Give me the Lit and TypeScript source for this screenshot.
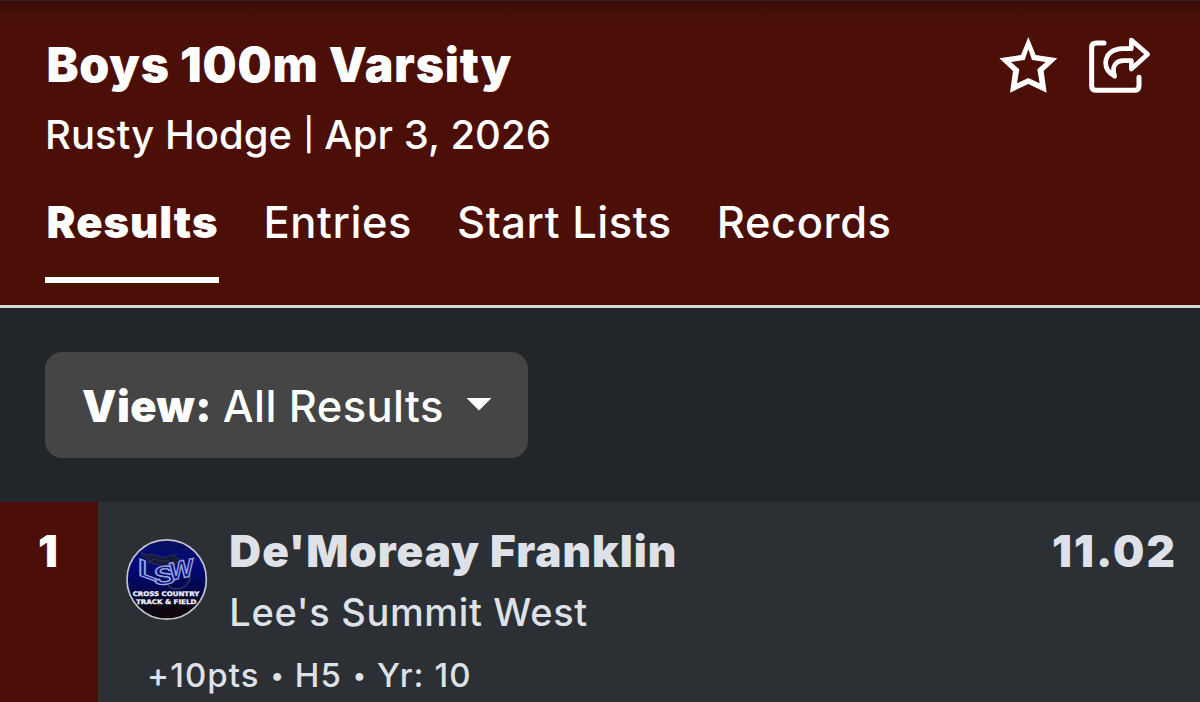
import { LitElement, html, css } from 'lit';
import { customElement, property, state } from 'lit/decorators.js';

@customElement('team-logo')
export class TeamLogo extends LitElement {
  static get styles() {
    return css`
      :host {
        display: block;
        width: 83.33px;
        height: 83.33px;
      }
      svg {
        display: block;
        width: 100%;
        height: 100%;
      }
      .mark {
        font-family: 'Liberation Sans', sans-serif;
        font-weight: 700;
        fill: #0c1688;
        stroke: #9ba5dc;
        stroke-width: 4;
      }
      .club {
        font-family: 'DejaVu Sans', sans-serif;
        font-weight: 700;
        font-size: 19px;
        fill: #f4f4fa;
        stroke: #f4f4fa;
        stroke-width: 0.8;
      }
    `;
  }

  render() {
    return html`
      <svg viewBox="45 24 250 250">
        <defs>
          <linearGradient id="sky" x1="0" y1="0" x2="0" y2="1">
            <stop offset="0" stop-color="#07105c" />
            <stop offset="0.3" stop-color="#020a7c" />
            <stop offset="0.62" stop-color="#03064e" />
            <stop offset="0.82" stop-color="#0a0718" />
            <stop offset="1" stop-color="#150507" />
          </linearGradient>
          <clipPath id="disc"><circle cx="170" cy="148.5" r="119" /></clipPath>
        </defs>
        <circle cx="170" cy="148.5" r="119" fill="url(#sky)" stroke="#c3c4cf" stroke-width="5" />
        <g fill="#161a3c" stroke="#3a3e58" stroke-width="2">
          <path d="M94 68 C110 82 128 66 150 80 C160 88 176 74 200 74 C190 80 200 86 216 88 L196 104 L150 108 L112 96 L124 92 C108 88 98 80 94 68Z" />
          <path d="M126 88 C144 86 150 98 176 92" fill="none" />
          <path d="M238 128 C246 156 224 180 192 176 C180 174 174 168 172 162" fill="none" stroke-width="4" />
        </g>
        <text class="mark" transform="translate(84 134) skewY(20)" font-size="72" textLength="60" lengthAdjust="spacingAndGlyphs">L</text>
        <text class="mark" transform="translate(131 165) skewY(-4)" font-size="78" textLength="66" lengthAdjust="spacingAndGlyphs">S</text>
        <text class="mark" transform="translate(178 152) skewY(-12)" font-size="76" textLength="72" lengthAdjust="spacingAndGlyphs">W</text>
        <g clip-path="url(#disc)">
          <text class="club" x="68" y="197" textLength="200" lengthAdjust="spacingAndGlyphs">CROSS COUNTRY</text>
          <text class="club" x="78" y="222" textLength="181" lengthAdjust="spacingAndGlyphs">TRACK &amp; FIELD</text>
        </g>
      </svg>
    `;
  }
}

@customElement('event-header')
export class EventHeader extends LitElement {
  static get styles() {
    return css`
      :host {
        display: block;
        box-sizing: border-box;
        height: 308px;
        padding: 36px 48px 0 45px;
        color: #fff;
        background: linear-gradient(#3a0c07, #480f08 12px, #4b0f07 30px);
        border-top: 1px solid #35221f;
        border-bottom: 3px solid #d9d9d6;
      }
      .top {
        display: flex;
        justify-content: space-between;
      }
      h1 {
        margin: 0 0 0 1.5px;
        font-size: 48px;
        font-weight: 900;
        line-height: 56px;
        letter-spacing: 0.8px;
      }
      .meet {
        display: flex;
        margin: 18px 0 0;
        font-size: 40px;
        line-height: 48px;
        letter-spacing: 0.05px;
      }
      .bar {
        font-size: 32px;
        margin: 0 10px 0 11px;
      }
      .actions {
        display: flex;
      }
      .actions svg {
        display: block;
        height: 60px;
      }
      .star {
        width: 60px;
      }
      .share {
        width: 64px;
        margin-left: 30px;
      }
      nav {
        display: flex;
        gap: 45px;
        margin-top: 37px;
      }
      .tab {
        padding-bottom: 29px;
        border-bottom: 6px solid transparent;
        font-size: 43.5px;
        line-height: 52px;
        letter-spacing: 0.56px;
        white-space: nowrap;
      }
      .tab.active {
        padding-left: 1.5px;
        font-weight: 900;
        letter-spacing: 1px;
        border-color: #fff;
      }
    `;
  }

  @property() heading = '';
  @property() place = '';
  @property() date = '';
  @property({ type: Array }) tabs: string[] = [];
  @state() private active = 0;

  render() {
    return html`
      <div class="top">
        <div>
          <h1>${this.heading}</h1>
          <div class="meet"><span>${this.place}</span><span class="bar">|</span><span>${this.date}</span></div>
        </div>
        <div class="actions">
          <svg class="star" viewBox="54 51 180 180" fill="#fff" fill-rule="evenodd">
            <path d="M145 51 L167 105 L232 115 L191 153 L200 218 L145 192 L90 218 L99 153 L58 115 L123 105Z M145 88 L156 120 L197 126 L172 148 L179 190 L145 174 L111 190 L118 148 L93 126 L134 120Z" />
          </svg>
          <svg class="share" viewBox="324 51 192 180" fill="none" stroke="#fff" stroke-width="15" stroke-linecap="round" stroke-linejoin="round">
            <path d="M372 69 H349 Q335 69 335 83 V197 Q335 211 349 211 H463 Q477 211 477 197 V172" />
            <path d="M454 60 L503 103 L454 147 V122 H432 C406 122 394 140 404 169 C388 160 377 149 377 130 C377 104 396 86 430 86 H454Z" stroke-width="14" />
          </svg>
        </div>
      </div>
      <nav>
        ${this.tabs.map((tab, i) => html`
          <div class="tab ${i === this.active ? 'active' : ''}" @click=${() => (this.active = i)}>${tab}</div>
        `)}
      </nav>
    `;
  }
}

@customElement('result-row')
export class ResultRow extends LitElement {
  static get styles() {
    return css`
      :host {
        display: grid;
        grid-template-columns: 98px 1fr;
        height: 200px;
        color: #dee2e8;
      }
      .place {
        padding: 23px 2px 0 0;
        font-size: 44px;
        font-weight: 900;
        line-height: 52px;
        text-align: center;
        color: #fff;
        background: #4b0f07;
      }
      .body {
        padding: 22px 25px 0 27px;
        background: #2c2f34;
        border-top: 1px solid #303338;
      }
      .main {
        display: flex;
      }
      team-logo {
        margin-top: 13px;
      }
      .who {
        flex: 1;
        margin-left: 21px;
      }
      .name,
      .mark {
        font-size: 44px;
        font-weight: 900;
        line-height: 52px;
        letter-spacing: 1.03px;
      }
      .mark {
        letter-spacing: 2.1px;
        margin-right: -2px;
      }
      .team {
        margin-top: 12px;
        font-size: 38px;
        line-height: 46px;
        letter-spacing: 0.66px;
      }
      .info {
        display: flex;
        margin: 20px 0 0 22px;
        font-size: 33px;
        line-height: 40px;
        letter-spacing: 1.1px;
      }
      .dot {
        width: 35px;
        font-size: 25px;
        letter-spacing: 0;
        text-align: center;
      }
    `;
  }

  @property({ type: Object }) result: any;

  render() {
    const r = this.result;
    return html`
      <div class="place">${r.place}</div>
      <div class="body">
        <div class="main">
          <team-logo></team-logo>
          <div class="who">
            <div class="name">${r.name}</div>
            <div class="team">${r.team}</div>
          </div>
          <div class="mark">${r.mark}</div>
        </div>
        <div class="info">
          ${r.info.map((item: string, i: number) => html`
            ${i > 0 ? html`<span class="dot">•</span>` : ''}
            <span>${item}</span>
          `)}
        </div>
      </div>
    `;
  }
}

@customElement('app-root')
export class AppRoot extends LitElement {
  static get styles() {
    return css`
      :host {
        display: block;
        height: 702px;
        overflow: hidden;
        font-family: Inter, 'Liberation Sans', sans-serif;
        font-weight: 500;
        background: #22252a;
      }
      .filter {
        padding: 44px 45px;
      }
      .view {
        display: inline-flex;
        align-items: center;
        vertical-align: top;
        box-sizing: border-box;
        width: 483px;
        height: 106px;
        padding: 1px 36px 0 37px;
        border-radius: 17px;
        color: #fff;
        background: #454545;
        font-size: 43.5px;
        letter-spacing: 0.4px;
        white-space: nowrap;
      }
      .view b {
        font-weight: 900;
        margin-right: 11px;
      }
      .caret {
        width: 26px;
        height: 13px;
        margin: 0 0 3px auto;
        background: #fff;
        clip-path: polygon(0 0, 100% 0, 50% 100%);
      }
    `;
  }

  private tabs = ['Results', 'Entries', 'Start Lists', 'Records'];

  private results = [
    {
      place: 1,
      name: "De'Moreay Franklin",
      team: "Lee's Summit West",
      mark: '11.02',
      info: ['+10pts', 'H5', 'Yr: 10'],
    },
  ];

  render() {
    return html`
      <event-header
        heading="Boys 100m Varsity"
        place="Rusty Hodge"
        date="Apr 3, 2026"
        .tabs=${this.tabs}
      ></event-header>
      <div class="filter">
        <div class="view"><b>View:</b><span>All Results</span><i class="caret"></i></div>
      </div>
      ${this.results.map(r => html`<result-row .result=${r}></result-row>`)}
    `;
  }
}
